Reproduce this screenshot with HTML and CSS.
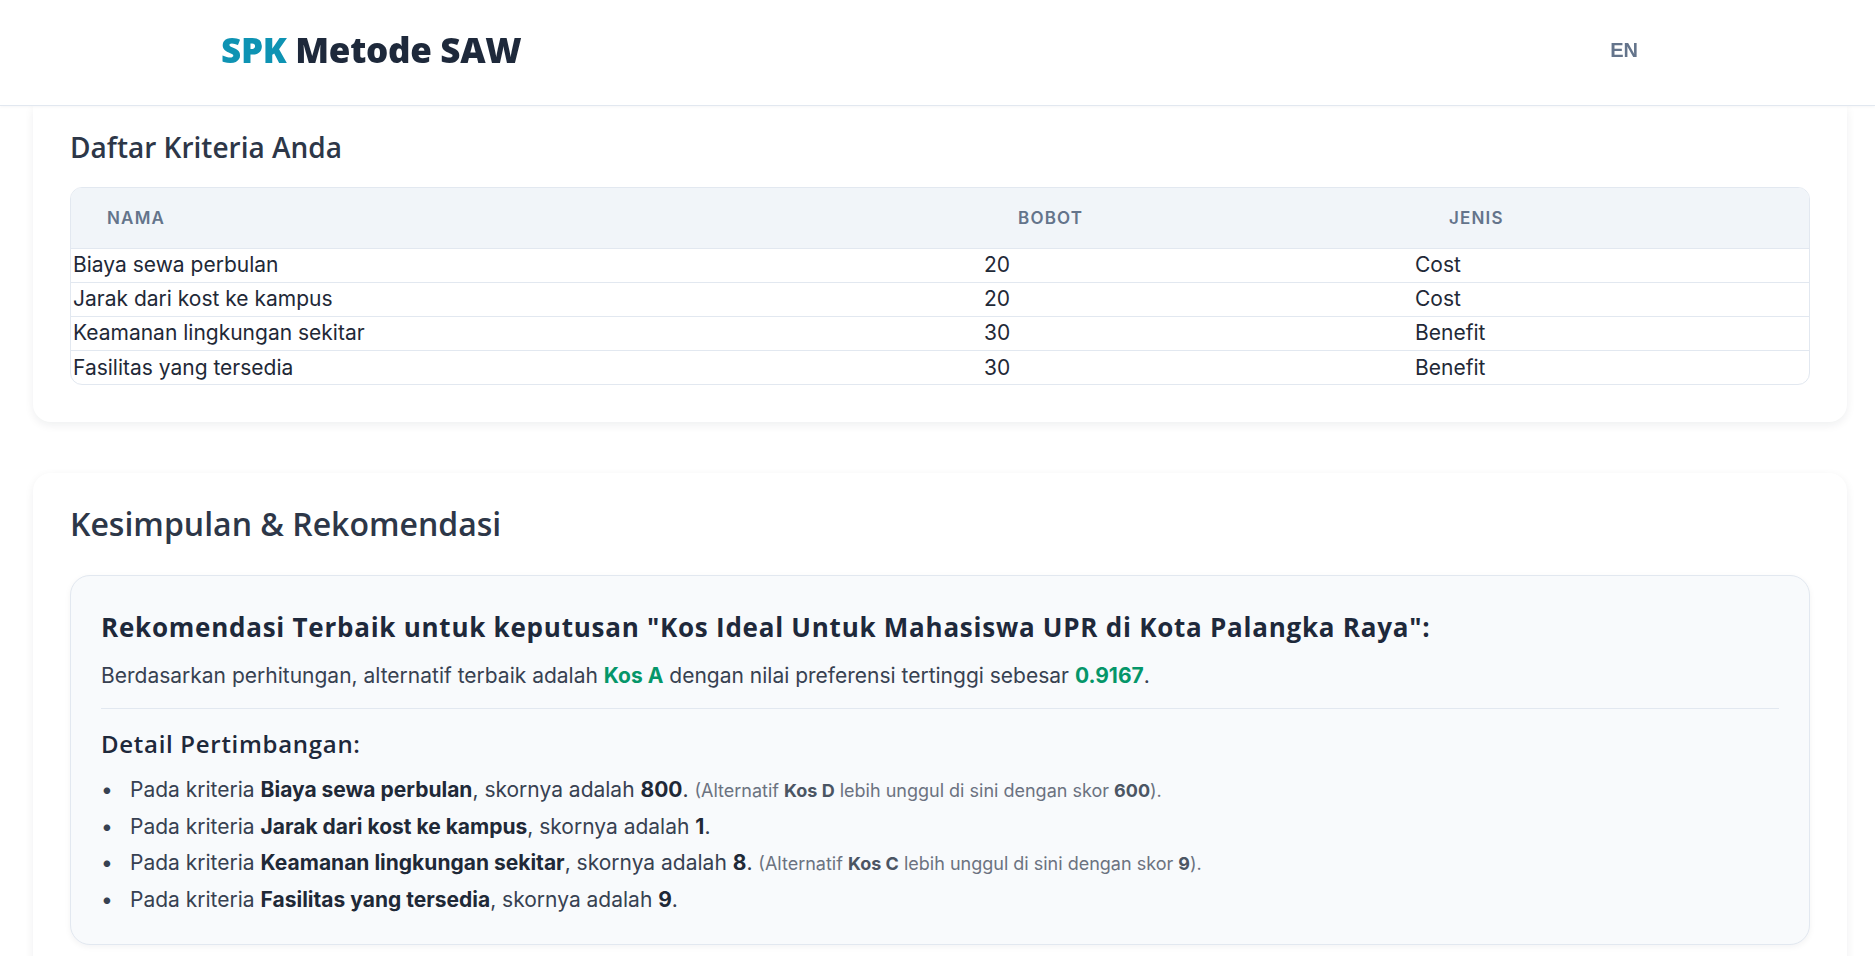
FILE: index.html
```html
<!DOCTYPE html>
<html lang="id">
<head>
<meta charset="utf-8">
<title>SPK Metode SAW</title>
<link rel="stylesheet" href="styles.css">
</head>
<body>
<header class="topbar">
  <div class="topbar-inner">
    <div class="brand"><span class="brand-accent">SPK</span> Metode SAW</div>
    <button class="lang">EN</button>
  </div>
</header>
<main class="page">
  <section class="card card-first">
    <h2 class="card-title">Daftar Kriteria Anda</h2>
    <div class="table-wrap">
      <table class="crit-table">
        <thead>
          <tr><th class="col-name">Nama</th><th class="col-weight">Bobot</th><th class="col-type">Jenis</th></tr>
        </thead>
        <tbody>
          <tr><td>Biaya sewa perbulan</td><td>20</td><td>Cost</td></tr>
          <tr><td>Jarak dari kost ke kampus</td><td>20</td><td>Cost</td></tr>
          <tr><td>Keamanan lingkungan sekitar</td><td>30</td><td>Benefit</td></tr>
          <tr><td>Fasilitas yang tersedia</td><td>30</td><td>Benefit</td></tr>
        </tbody>
      </table>
    </div>
  </section>

  <section class="card card-second">
    <h2 class="card-title card-title-lg">Kesimpulan &amp; Rekomendasi</h2>
    <div class="reco">
      <h3 class="reco-title">Rekomendasi Terbaik untuk keputusan "Kos Ideal Untuk Mahasiswa UPR di Kota Palangka Raya":</h3>
      <p class="reco-text">Berdasarkan perhitungan, alternatif terbaik adalah <strong class="hl">Kos A</strong> dengan nilai preferensi tertinggi sebesar <strong class="hl">0.9167</strong>.</p>
      <hr class="divider">
      <h4 class="detail-title">Detail Pertimbangan:</h4>
      <ul class="detail-list">
        <li>Pada kriteria <strong>Biaya sewa perbulan</strong>, skornya adalah <strong>800</strong>. <span class="note">(Alternatif <strong>Kos D</strong> lebih unggul di sini dengan skor <strong>600</strong>).</span></li>
        <li>Pada kriteria <strong>Jarak dari kost ke kampus</strong>, skornya adalah <strong>1</strong>.</li>
        <li>Pada kriteria <strong>Keamanan lingkungan sekitar</strong>, skornya adalah <strong>8</strong>. <span class="note">(Alternatif <strong>Kos C</strong> lebih unggul di sini dengan skor <strong>9</strong>).</span></li>
        <li>Pada kriteria <strong>Fasilitas yang tersedia</strong>, skornya adalah <strong>9</strong>.</li>
      </ul>
    </div>
  </section>
</main>
</body>
</html>
```

FILE: styles.css
```css
* { box-sizing: border-box; }

html, body {
  margin: 0;
  padding: 0;
  background: #ffffff;
  font-family: Inter, "Noto Sans", "Liberation Sans", sans-serif;
  color: #1f2937;
}

body { height: 956px; overflow: hidden; }

.topbar {
  position: sticky;
  top: 0;
  z-index: 10;
  height: 106px;
  background: #ffffff;
  border-bottom: 1px solid #e2e8f0;
  box-shadow: 0 1px 3px rgba(15, 23, 42, 0.04);
}

.topbar-inner {
  height: 105px;
  padding: 0 221px 6px;
  display: flex;
  align-items: center;
  justify-content: space-between;
}

.brand {
  font-family: "Open Sans", Inter, sans-serif;
  font-weight: 800;
  font-size: 35px;
  letter-spacing: -0.3px;
  color: #1e293b;
  line-height: 1;
}

.brand-accent { color: #0e93b3; }

.lang {
  font-family: "Liberation Sans", Arial, sans-serif;
  font-weight: 700;
  font-size: 20px;
  color: #64748b;
  background: none;
  border: 0;
  padding: 9px 16px 7px;
}

.page {
  padding: 0 28px 0 33px;
}

.card {
  background: #ffffff;
  border-radius: 18px;
  box-shadow: 0 3px 10px rgba(15, 23, 42, 0.07);
  padding: 31px 37px 37px;
}

.card-first {
  border-top-left-radius: 0;
  border-top-right-radius: 0;
  padding-top: 23px;
}

.card-second {
  margin-top: 51px;
}

.card-title {
  margin: 0;
  font-family: "Open Sans", Inter, sans-serif;
  font-weight: 600;
  font-size: 28px;
  line-height: 36px;
  color: #2d3748;
}

.card-title-lg { font-size: 32px; line-height: 40px; }

.table-wrap {
  margin-top: 22px;
  border: 1px solid #e2e8f0;
  border-radius: 12px;
  overflow: hidden;
}

.crit-table {
  width: 100%;
  border-collapse: collapse;
  font-size: 21px;
  color: #1f2937;
}

.crit-table th {
  height: 60px;
  background: #f1f5f9;
  text-align: left;
  font-size: 17px;
  font-weight: 600;
  text-transform: uppercase;
  letter-spacing: 0.07em;
  color: #64748b;
  padding: 0 0 0 36px;
}

.col-name { width: 911px; }
.col-weight { width: 431px; }

.crit-table td {
  height: 34px;
  padding: 0 2px;
  border-top: 1px solid #e2e8f0;
  line-height: 1.2;
}

.reco {
  margin-top: 31px;
  background: #f8fafc;
  border: 1px solid #e2e8f0;
  border-radius: 20px;
  box-shadow: 0 2px 6px rgba(15, 23, 42, 0.05);
  padding: 35px 30px 26px;
}

.reco-title {
  margin: 0;
  font-family: "Open Sans", Inter, sans-serif;
  font-weight: 700;
  font-size: 26px;
  line-height: 33px;
  letter-spacing: 0.75px;
  color: #1e293b;
}

.reco-text {
  margin: 17px 0 0;
  font-size: 21px;
  line-height: 30px;
  color: #374151;
}

.hl { color: #059669; font-weight: 700; }

.divider {
  margin: 17px 0 0;
  border: 0;
  border-top: 1px solid #e2e8f0;
}

.detail-title {
  margin: 20px 0 0;
  font-family: "Open Sans", Inter, sans-serif;
  font-weight: 600;
  font-size: 24px;
  line-height: 29px;
  letter-spacing: 0.7px;
  color: #1e293b;
}

.detail-list {
  margin: 14px 0 0;
  padding-left: 29px;
  list-style: none;
  font-size: 21px;
  line-height: 36px;
  color: #374151;
}

.detail-list li::before {
  content: "\2022";
  display: inline-block;
  width: 29px;
  margin-left: -29px;
  color: #374151;
}

.detail-list strong { color: #1f2937; font-weight: 700; }

.note {
  font-size: 18px;
  color: #6b7280;
}

.note strong { color: #4b5563; font-weight: 700; }
```
